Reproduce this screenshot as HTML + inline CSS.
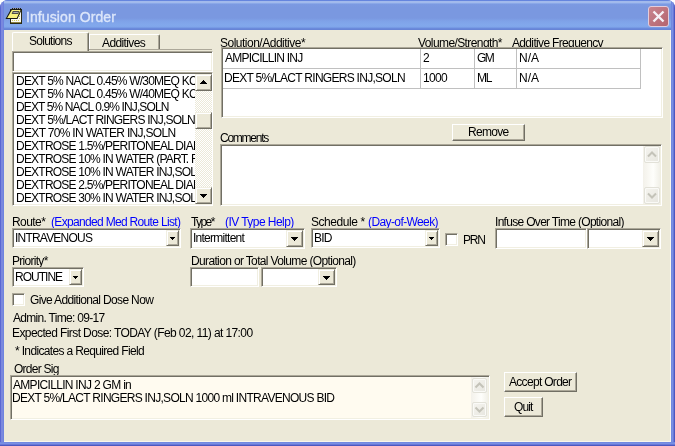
<!DOCTYPE html>
<html><head><meta charset="utf-8">
<style>
*{margin:0;padding:0}
html,body{width:675px;height:446px;overflow:hidden;background:#fff}
body{position:relative;font-family:"Liberation Sans",sans-serif;font-size:12px;color:#000}
.a{position:absolute}
.t{position:absolute;white-space:pre;line-height:13px;font-size:12px;font-family:"Liberation Sans",sans-serif;will-change:transform}
.sk{position:absolute;box-sizing:border-box;border:1px solid;border-color:#ACA899 #FFFFFF #FFFFFF #ACA899;box-shadow:inset 1px 1px 0 #716F64,inset -1px -1px 0 #F1EFE2;background:#fff}
.bt{position:absolute;box-sizing:border-box;border:1px solid;border-color:#FFFFFF #716F64 #716F64 #FFFFFF;box-shadow:inset -1px -1px 0 #ACA899;background:#ECE9D8}
.sb{position:absolute;box-sizing:border-box;border:1px solid;border-color:#F1EFE2 #716F64 #716F64 #F1EFE2;box-shadow:inset 1px 1px 0 #fff,inset -1px -1px 0 #ACA899;background:#ECE9D8}
.chk{position:absolute;background-color:#ECE9D8;background-image:linear-gradient(45deg,#fff 25%,transparent 25%,transparent 75%,#fff 75%),linear-gradient(45deg,#fff 25%,transparent 25%,transparent 75%,#fff 75%);background-size:2px 2px;background-position:0 0,1px 1px}
</style></head><body>
<div class="a" style="left:0;top:0;width:675px;height:446px;border-radius:8px 8px 0 0;background:#6E86DE;overflow:hidden">
<div class="a" style="left:0;top:0;width:675px;height:30px;background:linear-gradient(to bottom,#6585DE 0px,#6585DE 1px,#A2BAEC 1px,#A2BAEC 3px,#8AA8E8 3px,#8AA8E8 4px,#7C9AE2 4px,#7A98E0 8px,#7A98E0 18px,#7FA2E8 21px,#82A8EC 25px,#80A6EA 27px,#6E90E0 28px,#6784D6 29px,#6784D6 30px)"></div>
<div class="a" style="left:0;top:0;width:4px;height:446px;background:linear-gradient(to right,#5A68D2 0,#5A68D2 1px,#7A88DE 1px,#7A88DE 3px,#6E84DE 3px)"></div>
<div class="a" style="left:671px;top:0;width:4px;height:446px;background:linear-gradient(to right,#7189E0 0,#7189E0 1px,#7A90E3 1px,#7A90E3 2px,#6878D8 2px,#6878D8 3px,#4B58C0 3px)"></div>
<div class="a" style="left:0;top:442px;width:675px;height:4px;background:linear-gradient(to bottom,#7189E0 0,#7189E0 1px,#7A90E3 1px,#7A90E3 2px,#6878D8 2px,#6878D8 3px,#4B58C0 3px)"></div>
</div>
<svg class="a" style="left:0;top:0" width="30" height="30" viewBox="0 0 30 30">
<rect x="10" y="9" width="12" height="15" fill="#2A2A14"/>
<rect x="11" y="10" width="10" height="12" fill="#FAFAF4"/>
<rect x="11" y="22" width="10" height="1" fill="#8A8040"/>
<path d="M12 20h1v1h-1zM14 20h1v1h-1zM16 20h1v1h-1zM18 20h1v1h-1zM19 12h1v1h-1zM19 14h1v1h-1zM19 16h1v1h-1zM19 18h1v1h-1z" fill="#D8CC58"/>
<path d="M12 8h1v1h-1zM14 8h1v1h-1zM16 8h1v1h-1zM18 8h1v1h-1zM20 8h1v1h-1z" fill="#222"/>
<path d="M13 8h1v1h-1zM15 8h1v1h-1zM17 8h1v1h-1zM19 8h1v1h-1z" fill="#999"/>
<polygon points="11,9 22,9 17.5,19 5.5,19" fill="#1A1A10"/>
<polygon points="11.8,10 20.5,10 16.8,18 7.2,18" fill="#F6F07E"/>
<polygon points="12.8,11 19.3,11 18.3,14 11.6,14" fill="#4C4C46"/>
<polygon points="13.6,12 18.2,12 17.7,13 13.1,13" fill="#B0B0AC"/>
</svg>
<div class="t" id="title" style="left:26px;top:9px;font-size:14px;line-height:17px;font-weight:normal;-webkit-text-stroke:0.35px #DCE6FA;color:#DCE6FA;letter-spacing:0.09px">Infusion Order</div>
<div class="a" style="left:648px;top:6px;width:21px;height:21px;box-sizing:border-box;border-radius:3px;background:linear-gradient(135deg,#C8848E,#B4646F);border:1px solid #E2CCDC"></div>
<svg class="a" style="left:648px;top:6px" width="21" height="21"><path d="M5.5 5.5 L15.5 15.5 M15.5 5.5 L5.5 15.5" stroke="#F6F0F6" stroke-width="2.4"/></svg>
<div class="a" style="left:4px;top:30px;width:667px;height:412px;background:#ECE9D8"></div>
<div class="a" style="left:4px;top:441px;width:667px;height:1px;background:#F8F6EC"></div>
<div class="a" style="left:670px;top:30px;width:1px;height:412px;background:#F8F6EC"></div>
<div class="a" style="left:89px;top:49px;width:123px;height:1px;background:#ACA899"></div>
<div class="a" style="left:89px;top:34px;width:71px;height:15px;box-sizing:border-box;border-left:1px solid #fff;border-top:1px solid #fff;border-right:1px solid #716F64;box-shadow:inset -1px 0 0 #ACA899;border-top-right-radius:2px"></div>
<div class="a" style="left:12px;top:32px;width:77px;height:19px;box-sizing:border-box;border-left:1px solid #fff;border-top:1px solid #fff;border-right:1px solid #716F64;box-shadow:inset -1px 0 0 #ACA899;border-top-right-radius:2px;border-top-left-radius:2px;background:#ECE9D8"></div>
<div class="t" style="left:29.0px;top:35px;letter-spacing:-0.738px;color:#000">Solutions</div>
<div class="t" style="left:102.0px;top:37px;letter-spacing:-0.613px;color:#000">Additives</div>
<div class="sk" style="left:12px;top:51px;width:201px;height:21px;background:#fff"></div>
<div class="sk" style="left:12px;top:72px;width:201px;height:134px;background:#fff"></div>
<div class="a" style="left:14px;top:74px;width:197px;height:130px;overflow:hidden"><div class="a" style="left:-14px;top:-74px;width:675px;height:446px">
<div class="t" style="left:16.0px;top:75px;letter-spacing:-0.78px;color:#000">DEXT 5% NACL 0.45% W/30MEQ KCL</div>
<div class="t" style="left:16.0px;top:88px;letter-spacing:-0.78px;color:#000">DEXT 5% NACL 0.45% W/40MEQ KCL</div>
<div class="t" style="left:16.0px;top:101px;letter-spacing:-0.88px;color:#000">DEXT 5% NACL 0.9% INJ,SOLN</div>
<div class="t" style="left:16.0px;top:114px;letter-spacing:-0.78px;color:#000">DEXT 5%/LACT RINGERS INJ,SOLN</div>
<div class="t" style="left:16.0px;top:127px;letter-spacing:-0.68px;color:#000">DEXT 70% IN WATER INJ,SOLN</div>
<div class="t" style="left:16.0px;top:140px;letter-spacing:-0.78px;color:#000">DEXTROSE 1.5%/PERITONEAL DIAL</div>
<div class="t" style="left:16.0px;top:153px;letter-spacing:-0.78px;color:#000">DEXTROSE 10% IN WATER (PART. FILL)</div>
<div class="t" style="left:16.0px;top:166px;letter-spacing:-0.78px;color:#000">DEXTROSE 10% IN WATER INJ,SOLN</div>
<div class="t" style="left:16.0px;top:179px;letter-spacing:-0.78px;color:#000">DEXTROSE 2.5%/PERITONEAL DIAL</div>
<div class="t" style="left:16.0px;top:192px;letter-spacing:-0.78px;color:#000">DEXTROSE 30% IN WATER INJ,SOLN</div>
</div></div>
<div class="chk" style="left:195px;top:74px;width:17px;height:130px"></div>
<div class="sb" style="left:195px;top:74px;width:17px;height:17px"></div><div class="a" style="left:203px;top:80px;width:1px;height:1px;background:#000"></div><div class="a" style="left:202px;top:81px;width:3px;height:1px;background:#000"></div><div class="a" style="left:201px;top:82px;width:5px;height:1px;background:#000"></div><div class="a" style="left:200px;top:83px;width:7px;height:1px;background:#000"></div>
<div class="sb" style="left:195px;top:112px;width:17px;height:17px"></div>
<div class="sb" style="left:195px;top:187px;width:17px;height:17px"></div><div class="a" style="left:200px;top:194px;width:7px;height:1px;background:#000"></div><div class="a" style="left:201px;top:195px;width:5px;height:1px;background:#000"></div><div class="a" style="left:202px;top:196px;width:3px;height:1px;background:#000"></div><div class="a" style="left:203px;top:197px;width:1px;height:1px;background:#000"></div>
<div class="t" style="left:220.0px;top:37px;letter-spacing:-0.5px;color:#000">Solution/Additive*</div>
<div class="t" style="left:418.3px;top:37px;letter-spacing:-0.593px;color:#000">Volume/Strength*</div>
<div class="t" style="left:512.2px;top:37px;letter-spacing:-0.659px;color:#000">Additive Frequency</div>
<div class="sk" style="left:221px;top:47px;width:442px;height:71px;background:#fff"></div>
<div class="a" style="left:223px;top:68px;width:418px;height:1px;background:#C0C0C0"></div>
<div class="a" style="left:223px;top:88px;width:418px;height:1px;background:#C0C0C0"></div>
<div class="a" style="left:420px;top:49px;width:1px;height:40px;background:#C0C0C0"></div>
<div class="a" style="left:474px;top:49px;width:1px;height:40px;background:#C0C0C0"></div>
<div class="a" style="left:516px;top:49px;width:1px;height:40px;background:#C0C0C0"></div>
<div class="a" style="left:640px;top:49px;width:1px;height:40px;background:#C0C0C0"></div>
<div class="t" style="left:225.0px;top:52px;letter-spacing:-0.754px;color:#000">AMPICILLIN INJ</div>
<div class="t" style="left:423.0px;top:52px;letter-spacing:0.0px;color:#000">2</div>
<div class="t" style="left:477.0px;top:52px;letter-spacing:-1.6px;color:#000">GM</div>
<div class="t" style="left:519.0px;top:52px;letter-spacing:0.0px;color:#000">N/A</div>
<div class="t" style="left:224.0px;top:72px;letter-spacing:-0.714px;color:#000">DEXT 5%/LACT RINGERS INJ,SOLN</div>
<div class="t" style="left:423.0px;top:72px;letter-spacing:-0.667px;color:#000">1000</div>
<div class="t" style="left:477.0px;top:72px;letter-spacing:-1.3px;color:#000">ML</div>
<div class="t" style="left:519.0px;top:72px;letter-spacing:0.0px;color:#000">N/A</div>
<div class="bt" style="left:452px;top:124px;width:73px;height:17px"></div>
<div class="t" style="left:468.0px;top:126px;letter-spacing:-0.72px;color:#000">Remove</div>
<div class="t" style="left:220.0px;top:132px;letter-spacing:-1.243px;color:#000">Comments</div>
<div class="sk" style="left:220px;top:144px;width:442px;height:62px;background:#fff"></div>
<div class="a" style="left:643px;top:146px;width:17px;height:58px;background:linear-gradient(to right,#F3F1EA,#FEFEFB 60%,#F1F0E8)"></div><div class="a" style="left:644px;top:146px;width:16px;height:17px;box-sizing:border-box;border:1px solid #E2E1D8;border-radius:2px;background:linear-gradient(135deg,#F5F4EF,#E7E6DF);box-shadow:inset 0 0 0 1px #FAFAF7"></div><svg class="a" style="left:0;top:0;overflow:visible" width="1" height="1"><path d="M648.0 156.5 L652.0 152.5 L656.0 156.5" stroke="#C4C3B9" stroke-width="2" fill="none"/></svg><div class="a" style="left:644px;top:187px;width:16px;height:17px;box-sizing:border-box;border:1px solid #E2E1D8;border-radius:2px;background:linear-gradient(135deg,#F5F4EF,#E7E6DF);box-shadow:inset 0 0 0 1px #FAFAF7"></div><svg class="a" style="left:0;top:0;overflow:visible" width="1" height="1"><path d="M648.0 193.5 L652.0 197.5 L656.0 193.5" stroke="#C4C3B9" stroke-width="2" fill="none"/></svg>
<div class="t" style="left:12.0px;top:216px;letter-spacing:-0.56px;color:#000">Route*</div>
<div class="t" style="left:51.0px;top:216px;letter-spacing:-0.675px;color:#00f">(Expanded Med Route List)</div>
<div class="t" style="left:191.0px;top:216px;letter-spacing:-1.575px;color:#000">Type*</div>
<div class="t" style="left:224.5px;top:216px;letter-spacing:-0.554px;color:#00f">(IV Type Help)</div>
<div class="t" style="left:311.0px;top:216px;letter-spacing:-0.444px;color:#000">Schedule *</div>
<div class="t" style="left:368.3px;top:216px;letter-spacing:-0.6px;color:#00f">(Day-of-Week)</div>
<div class="t" style="left:495.0px;top:216px;letter-spacing:-0.692px;color:#000">Infuse Over Time (Optional)</div>
<div class="t" style="left:12.0px;top:255px;letter-spacing:-0.713px;color:#000">Priority*</div>
<div class="t" style="left:190.6px;top:255px;letter-spacing:-0.644px;color:#000">Duration or Total Volume (Optional)</div>
<div class="sk" style="left:12px;top:228px;width:169px;height:20px;background:#fff"></div>
<div class="sb" style="left:166px;top:230px;width:13px;height:16px"></div><div class="a" style="left:170px;top:237px;width:5px;height:1px;background:#000"></div><div class="a" style="left:171px;top:238px;width:3px;height:1px;background:#000"></div><div class="a" style="left:172px;top:239px;width:1px;height:1px;background:#000"></div>
<div class="t" style="left:15.0px;top:232px;letter-spacing:-0.79px;color:#000">INTRAVENOUS</div>
<div class="sk" style="left:190px;top:228px;width:115px;height:21px;background:#fff"></div>
<div class="sb" style="left:286px;top:230px;width:17px;height:17px"></div><div class="a" style="left:291px;top:237px;width:7px;height:1px;background:#000"></div><div class="a" style="left:292px;top:238px;width:5px;height:1px;background:#000"></div><div class="a" style="left:293px;top:239px;width:3px;height:1px;background:#000"></div><div class="a" style="left:294px;top:240px;width:1px;height:1px;background:#000"></div>
<div class="t" style="left:193.0px;top:232px;letter-spacing:-0.745px;color:#000">Intermittent</div>
<div class="sk" style="left:311px;top:228px;width:129px;height:20px;background:#fff"></div>
<div class="sb" style="left:425px;top:230px;width:13px;height:16px"></div><div class="a" style="left:429px;top:237px;width:5px;height:1px;background:#000"></div><div class="a" style="left:430px;top:238px;width:3px;height:1px;background:#000"></div><div class="a" style="left:431px;top:239px;width:1px;height:1px;background:#000"></div>
<div class="t" style="left:314.0px;top:232px;letter-spacing:-0.75px;color:#000">BID</div>
<div class="sk" style="left:445px;top:233px;width:13px;height:13px;background:#fff"></div>
<div class="t" style="left:463.0px;top:234px;letter-spacing:-1.2px;color:#000">PRN</div>
<div class="sk" style="left:495px;top:228px;width:92px;height:21px;background:#fff"></div>
<div class="sk" style="left:587px;top:228px;width:74px;height:21px;background:#fff"></div>
<div class="sb" style="left:642px;top:230px;width:17px;height:17px"></div><div class="a" style="left:647px;top:237px;width:7px;height:1px;background:#000"></div><div class="a" style="left:648px;top:238px;width:5px;height:1px;background:#000"></div><div class="a" style="left:649px;top:239px;width:3px;height:1px;background:#000"></div><div class="a" style="left:650px;top:240px;width:1px;height:1px;background:#000"></div>
<div class="sk" style="left:12px;top:267px;width:72px;height:20px;background:#fff"></div>
<div class="sb" style="left:69px;top:269px;width:13px;height:16px"></div><div class="a" style="left:73px;top:276px;width:5px;height:1px;background:#000"></div><div class="a" style="left:74px;top:277px;width:3px;height:1px;background:#000"></div><div class="a" style="left:75px;top:278px;width:1px;height:1px;background:#000"></div>
<div class="t" style="left:15.0px;top:271px;letter-spacing:-0.983px;color:#000">ROUTINE</div>
<div class="sk" style="left:190px;top:267px;width:69px;height:20px;background:#fff"></div>
<div class="sk" style="left:261px;top:267px;width:76px;height:20px;background:#fff"></div>
<div class="sb" style="left:318px;top:269px;width:17px;height:16px"></div><div class="a" style="left:323px;top:276px;width:7px;height:1px;background:#000"></div><div class="a" style="left:324px;top:277px;width:5px;height:1px;background:#000"></div><div class="a" style="left:325px;top:278px;width:3px;height:1px;background:#000"></div><div class="a" style="left:326px;top:279px;width:1px;height:1px;background:#000"></div>
<div class="sk" style="left:12px;top:293px;width:13px;height:13px;background:#fff"></div>
<div class="t" style="left:29.8px;top:294px;letter-spacing:-0.648px;color:#000">Give Additional Dose Now</div>
<div class="t" style="left:13.0px;top:312px;letter-spacing:-0.7px;color:#000">Admin. Time: 09-17</div>
<div class="t" style="left:12.0px;top:327px;letter-spacing:-0.594px;color:#000">Expected First Dose: TODAY (Feb 02, 11) at 17:00</div>
<div class="t" style="left:14.7px;top:345px;letter-spacing:-0.659px;color:#000">* Indicates a Required Field</div>
<div class="t" style="left:13.7px;top:363px;letter-spacing:-0.738px;color:#000">Order Sig</div>
<div class="sk" style="left:10px;top:375px;width:480px;height:45px;background:#FFFBF0"></div>
<div class="t" style="left:13.0px;top:379px;letter-spacing:-0.695px;color:#000">AMPICILLIN INJ 2 GM in</div>
<div class="t" style="left:12.2px;top:392px;letter-spacing:-0.713px;color:#000">DEXT 5%/LACT RINGERS INJ,SOLN 1000 ml INTRAVENOUS BID</div>
<div class="a" style="left:471px;top:377px;width:17px;height:41px;background:linear-gradient(to right,#F3F1EA,#FEFEFB 60%,#F1F0E8)"></div><div class="a" style="left:472px;top:378px;width:15px;height:15px;box-sizing:border-box;border:1px solid #E2E1D8;border-radius:2px;background:linear-gradient(135deg,#F5F4EF,#E7E6DF);box-shadow:inset 0 0 0 1px #FAFAF7"></div><svg class="a" style="left:0;top:0;overflow:visible" width="1" height="1"><path d="M475.5 387.5 L479.5 383.5 L483.5 387.5" stroke="#C4C3B9" stroke-width="2" fill="none"/></svg><div class="a" style="left:472px;top:402px;width:15px;height:15px;box-sizing:border-box;border:1px solid #E2E1D8;border-radius:2px;background:linear-gradient(135deg,#F5F4EF,#E7E6DF);box-shadow:inset 0 0 0 1px #FAFAF7"></div><svg class="a" style="left:0;top:0;overflow:visible" width="1" height="1"><path d="M475.5 407.5 L479.5 411.5 L483.5 407.5" stroke="#C4C3B9" stroke-width="2" fill="none"/></svg>
<div class="bt" style="left:504px;top:372px;width:73px;height:20px"></div>
<div class="bt" style="left:504px;top:397px;width:39px;height:20px"></div>
<div class="t" style="left:509.0px;top:376px;letter-spacing:-0.691px;color:#000">Accept Order</div>
<div class="t" style="left:514.0px;top:401px;letter-spacing:-0.867px;color:#000">Quit</div>
</body></html>
